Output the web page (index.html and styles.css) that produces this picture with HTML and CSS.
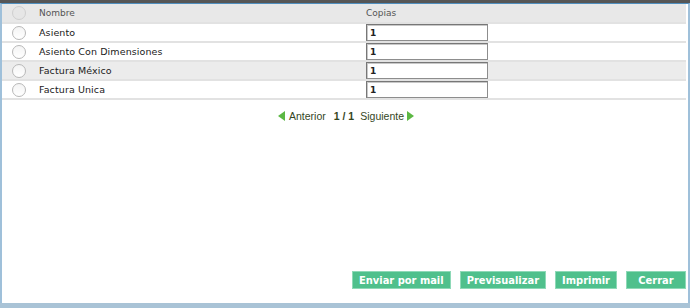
FILE: index.html
```html
<!DOCTYPE html>
<html lang="es">
<head>
    <meta charset="UTF-8">
    <title>Formatos de impresión</title>
    <link rel="stylesheet" href="styles.css">
</head>
<body>
    <div class="dialog">
        <div class="dialog-body">
            <table class="grid">
                <thead>
                    <tr>
                        <th class="col-check"><span class="radio faded"></span></th>
                        <th class="col-name">Nombre</th>
                        <th class="col-copies">Copias</th>
                    </tr>
                </thead>
                <tbody>
                    <tr>
                        <td class="col-check"><span class="radio"></span></td>
                        <td class="col-name">Asiento</td>
                        <td class="col-copies"><input type="text" value="1"></td>
                    </tr>
                    <tr>
                        <td class="col-check"><span class="radio"></span></td>
                        <td class="col-name">Asiento Con Dimensiones</td>
                        <td class="col-copies"><input type="text" value="1"></td>
                    </tr>
                    <tr class="alt">
                        <td class="col-check"><span class="radio"></span></td>
                        <td class="col-name">Factura México</td>
                        <td class="col-copies"><input type="text" value="1"></td>
                    </tr>
                    <tr>
                        <td class="col-check"><span class="radio"></span></td>
                        <td class="col-name">Factura Unica</td>
                        <td class="col-copies"><input type="text" value="1"></td>
                    </tr>
                </tbody>
            </table>

            <div class="pager">
                <span class="arrow left"></span>
                <span class="pager-link">Anterior</span>
                <span class="pager-count">1 / 1</span>
                <span class="pager-link">Siguiente</span>
                <span class="arrow right"></span>
            </div>
        </div>

        <div class="actions">
            <button class="btn">Enviar por mail</button>
            <button class="btn">Previsualizar</button>
            <button class="btn">Imprimir</button>
            <button class="btn">Cerrar</button>
        </div>
        <div class="status-strip"></div>
    </div>
</body>
</html>
```

FILE: styles.css
```css
* {
    box-sizing: border-box;
}

body {
    margin: 0;
    background-color: #fff;
    font-family: Tahoma, "DejaVu Sans", sans-serif;
}

.dialog {
    width: 690px;
    height: 308px;
    display: flex;
    flex-direction: column;
    border-top: 3px solid #565656;
}

.dialog-body {
    flex: 1;
    border-top: 1px solid #4f8fbf;
    border-left: 2px solid #9fc0da;
    border-right: 2px solid #9fc0da;
    padding-right: 2px;
}

.grid {
    width: 100%;
    border-collapse: collapse;
    table-layout: fixed;
}

.grid th,
.grid td {
    height: 19px;
    padding: 0;
    text-align: left;
    border-bottom: 2px solid #e2e2e2;
}

.grid th {
    background-color: #e8e8e8;
    font-weight: normal;
    font-size: 9px;
    color: #555;
}

.grid td {
    font-size: 9.5px;
    color: #1a1a1a;
    letter-spacing: 0.1px;
}

.grid tr.alt td {
    background-color: #ececec;
}

.col-check {
    width: 37px;
    text-align: center;
}

.grid .col-check {
    padding-left: 10px;
}

.grid .col-copies {
    width: 320px;
}

.grid th.col-copies {
    padding-left: 0;
}

.radio {
    display: block;
    width: 14px;
    height: 14px;
    border-radius: 50%;
    border: 1px solid #b8b8b8;
    background: linear-gradient(#f4f4f4, #fff);
}

.radio.faded {
    border-color: #cfcfcf;
    background: #e6e6e6;
}

.grid input {
    display: block;
    width: 122px;
    height: 17px;
    margin: 0;
    padding: 0 3px;
    border: 1px solid #8d8d8d;
    border-top-color: #777;
    border-left-color: #777;
    box-shadow: inset 1px 1px 0 #c8c8c8;
    font-family: Tahoma, "DejaVu Sans", sans-serif;
    font-size: 9px;
    font-weight: bold;
    color: #222;
}

.pager {
    display: flex;
    justify-content: center;
    align-items: center;
    gap: 3px;
    margin-top: 10px;
    margin-left: 4px;
    font-family: "Liberation Sans", Arial, sans-serif;
    font-size: 10.5px;
    color: #34461e;
}

.pager-count {
    font-weight: bold;
    margin: 0 3px 0 5px;
}

.arrow {
    width: 0;
    height: 0;
    border-top: 5px solid transparent;
    border-bottom: 5px solid transparent;
}

.arrow.left {
    border-right: 7px solid #5cb844;
    margin-right: 1px;
}

.arrow.right {
    border-left: 7px solid #5cb844;
}

.actions {
    display: flex;
    justify-content: flex-end;
    gap: 9px;
    padding: 0 2px 14px 0;
    border-left: 2px solid #9fc0da;
    border-right: 2px solid #9fc0da;
}

.btn {
    min-width: 60px;
    height: 18px;
    padding: 0 6px;
    border: 1px solid #8ed9b7;
    background-color: #4fc08c;
    color: #fff;
    font-family: "DejaVu Sans Condensed", "DejaVu Sans", sans-serif;
    font-size: 11px;
    font-weight: bold;
    line-height: 15px;
}

.status-strip {
    height: 5px;
    background-color: #a9c3d6;
}
```
